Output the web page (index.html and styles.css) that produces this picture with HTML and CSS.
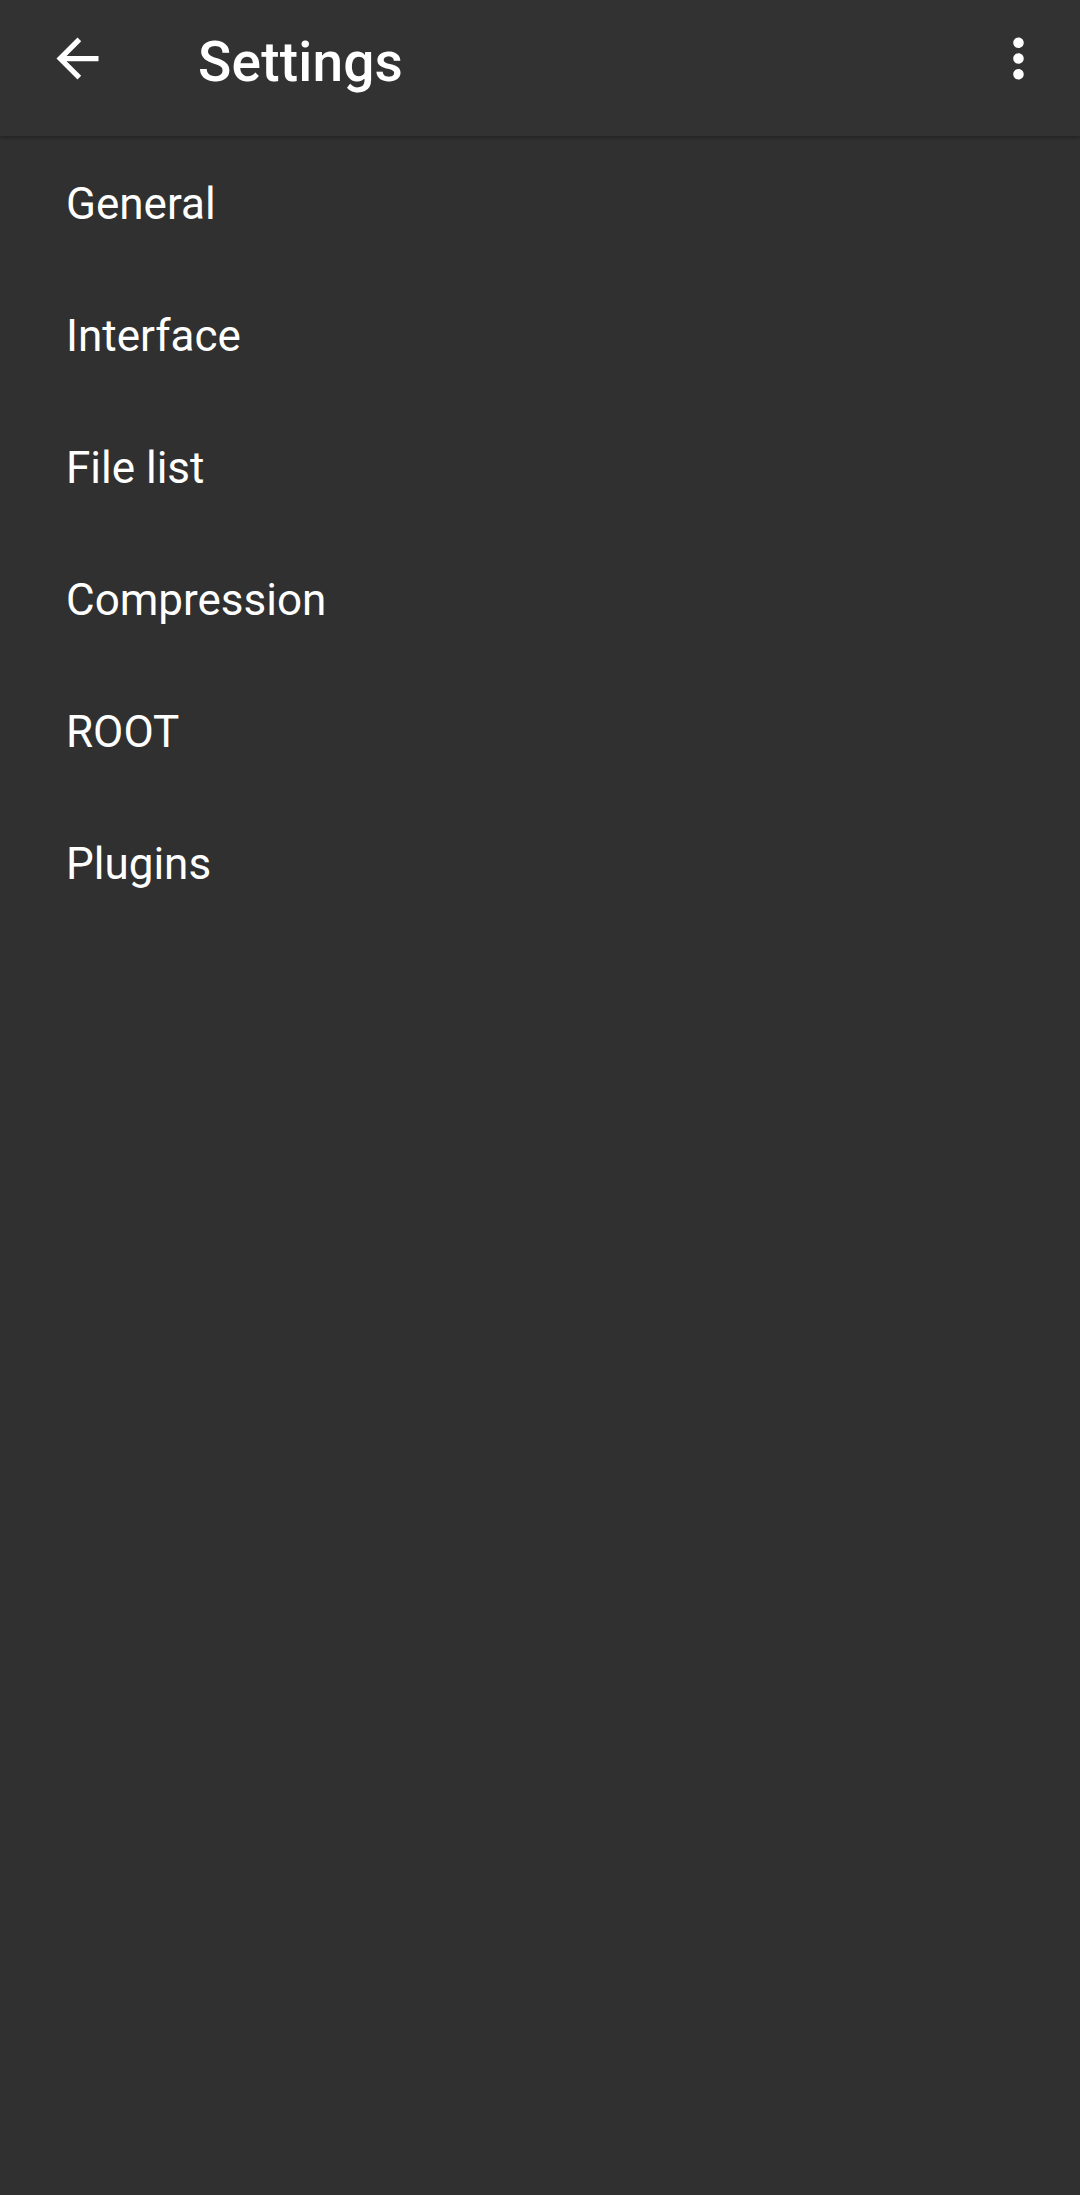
FILE: index.html
```html
<!DOCTYPE html>
<html lang="en">
<head>
  <meta charset="UTF-8">
  <meta name="viewport" content="width=device-width, initial-scale=1.0">
  <link rel="stylesheet" href="styles.css">
  <title>Settings</title>
</head>
<body>

  <div class="toolbar">
    <button class="icon-btn back-btn" aria-label="Back">
      <svg viewBox="0 0 24 24" width="63" height="63">
        <path fill="#ffffff" d="M20 11H7.83l5.59-5.59L12 4l-8 8 8 8 1.41-1.41L7.83 13H20v-2z"/>
      </svg>
    </button>
    <h1 class="title">Settings</h1>
    <button class="icon-btn menu-btn" aria-label="More options">
      <svg viewBox="0 0 24 24" width="63" height="63">
        <path fill="#ffffff" d="M12 8c1.1 0 2-.9 2-2s-.9-2-2-2-2 .9-2 2 .9 2 2 2zm0 2c-1.1 0-2 .9-2 2s.9 2 2 2 2-.9 2-2-.9-2-2-2zm0 6c-1.1 0-2 .9-2 2s.9 2 2 2 2-.9 2-2-.9-2-2-2z"/>
      </svg>
    </button>
  </div>

  <ul class="settings-list">
    <li class="settings-item">General</li>
    <li class="settings-item">Interface</li>
    <li class="settings-item">File list</li>
    <li class="settings-item">Compression</li>
    <li class="settings-item">ROOT</li>
    <li class="settings-item">Plugins</li>
  </ul>

</body>
</html>
```

FILE: styles.css
```css
body {
    margin: 0;
    min-height: 100vh;
    background-color: #303030;
    color: #ffffff;
    font-family: Roboto, "Noto Sans", sans-serif;
}

.toolbar {
    display: flex;
    align-items: center;
    height: 136px;
    padding: 0 30px 20px 46px;
    box-sizing: border-box;
    background-color: #323232;
    box-shadow: 0 2px 3px rgba(0, 0, 0, 0.25);
    position: relative;
}

.icon-btn {
    display: flex;
    padding: 0;
    border: none;
    background: none;
}

.title {
    flex: 1;
    margin: 0 0 0 89px;
    padding-top: 8px;
    font-size: 55px;
    font-weight: 500;
    letter-spacing: 0.2px;
}

.settings-list {
    list-style: none;
    margin: 0;
    padding: 0;
}

.settings-item {
    display: flex;
    align-items: center;
    height: 132px;
    box-sizing: border-box;
    padding: 4px 0 0 66px;
    font-size: 44px;
}
```
